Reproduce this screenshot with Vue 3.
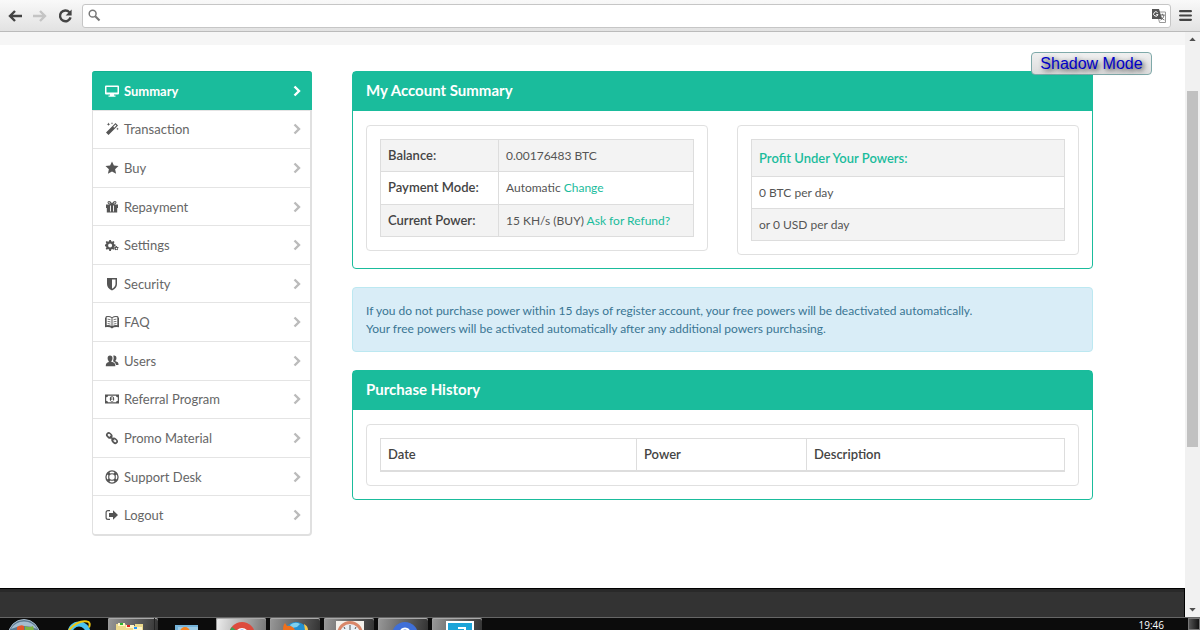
<template>
  <div class="screen">
    <header class="toolbar">
      <button class="tool" aria-label="Back">
        <svg viewBox="0 0 16 16"><path class="stroke dark" d="M15 8H3M8 3L3 8l5 5" /></svg>
      </button>
      <button class="tool" aria-label="Forward" disabled>
        <svg viewBox="0 0 16 16"><path class="stroke pale" d="M1 8h12M8 3l5 5-5 5" /></svg>
      </button>
      <button class="tool" aria-label="Reload">
        <svg viewBox="0 0 16 16">
          <path class="stroke dark" d="M12.4 4.2A5.4 5.4 0 1 0 13.6 9.4" />
          <path class="dark-fill" d="M14.6 1.4v6.2H8.6z" />
        </svg>
      </button>
      <form class="omnibox" @submit.prevent>
        <svg class="search" viewBox="0 0 14 14">
          <circle cx="5" cy="5" r="3.7" fill="none" stroke="#777" stroke-width="1.6" />
          <path d="M7.8 7.8l4.6 4.6" stroke="#777" stroke-width="2.2" />
        </svg>
        <input v-model="address" type="text" aria-label="Address" />
        <svg class="translate" viewBox="0 0 14 14">
          <path d="M5 3h8.5v10.5H7.5z" fill="#fff" stroke="#999" />
          <path d="M0 0h7l3 10H0z" fill="#555" />
          <path d="M5.6 3.6A2.2 2.2 0 1 0 6 5.6H4.2" fill="none" stroke="#fff" />
          <path d="M8 6h4.6M10.4 4.8V6M12 6c-.4 2.4-1.6 4-3.4 5M8.8 7.4c.6 1.6 1.8 2.8 3.6 3.6" fill="none" stroke="#666" />
        </svg>
      </form>
      <button class="tool menu" aria-label="Menu">
        <svg viewBox="0 0 12 12"><path d="M1 2h10M1 6h10M1 10h10" stroke="#444" stroke-width="2" stroke-linecap="round" /></svg>
      </button>
    </header>

    <div class="viewport">
      <div class="page">
        <div class="strip"></div>
        <button class="shadow-mode">Shadow Mode</button>

        <div class="container">
          <nav class="sidebar">
            <a
              v-for="item in menu"
              :key="item.name"
              href="#"
              :class="{ active: item.name === current }"
              @click.prevent="current = item.name"
            >
              <svg class="icon" viewBox="0 0 14 14"><path :d="item.icon" fill-rule="evenodd" /></svg>
              <span>{{ item.name }}</span>
              <svg class="chevron" viewBox="0 0 8 12"><path d="M1.5 1.5L6 6l-4.5 4.5" /></svg>
            </a>
          </nav>

          <main class="main">
            <section class="panel">
              <h2>My Account Summary</h2>
              <div class="panel-body columns">
                <div class="well">
                  <table class="striped account">
                    <tbody>
                      <tr v-for="row in account" :key="row.label">
                        <th scope="row">{{ row.label }}</th>
                        <td>{{ row.value }} <a v-if="row.link" href="#">{{ row.link }}</a></td>
                      </tr>
                    </tbody>
                  </table>
                </div>
                <div class="well">
                  <table class="striped profit">
                    <thead>
                      <tr><th scope="col">Profit Under Your Powers:</th></tr>
                    </thead>
                    <tbody>
                      <tr><td>0 BTC per day</td></tr>
                      <tr><td>or 0 USD per day</td></tr>
                    </tbody>
                  </table>
                </div>
              </div>
            </section>

            <div class="alert">
              If you do not purchase power within 15 days of register account, your free powers will be deactivated automatically.<br />
              Your free powers will be activated automatically after any additional powers purchasing.
            </div>

            <section class="panel">
              <h2>Purchase History</h2>
              <div class="panel-body">
                <div class="well">
                  <table class="history">
                    <thead>
                      <tr>
                        <th scope="col" class="date">Date</th>
                        <th scope="col" class="power">Power</th>
                        <th scope="col">Description</th>
                      </tr>
                    </thead>
                  </table>
                </div>
              </div>
            </section>
          </main>
        </div>

        <footer class="footer"></footer>
      </div>

      <div class="scrollbar">
        <svg viewBox="0 0 15 15"><path d="M7.5 5.5l3.2 3.5H4.3z" /></svg>
        <div class="before"></div>
        <div class="thumb"></div>
        <div class="after"></div>
        <svg viewBox="0 0 15 15"><path d="M7.5 9.5L4.3 6h6.4z" /></svg>
      </div>
    </div>

    <div class="taskbar">
      <button class="task" aria-label="Start">
        <svg viewBox="0 0 50 12">
          <circle cx="24" cy="17" r="15.5" fill="#5b7890" stroke="#a9bccb" />
          <path d="M11 11a15 15 0 0 1 26 0q-13-6-26 0z" fill="#a5bdd0" />
          <path d="M17 12V9q4-3 7-1v4z" fill="#e4572b" />
          <path d="M25 12V8q4 2 8 0l1 4z" fill="#7db342" />
        </svg>
      </button>
      <button class="task" aria-label="Internet Explorer">
        <svg viewBox="0 0 50 12">
          <circle cx="25" cy="15" r="9" fill="none" stroke="#4cc3f0" stroke-width="5" />
          <path d="M15 12Q24 2 33 3.5q4 .5 2 6" fill="none" stroke="#f2c811" stroke-width="2" />
        </svg>
      </button>
      <button class="task open" aria-label="Explorer">
        <svg viewBox="0 0 50 12">
          <path d="M46.5 0v12" stroke="#222" />
          <path d="M8 12V6h9l2 2h8V6h8v6z" fill="#ecd98c" />
          <path d="M10 5h7v3h-7zM18 7h8v3h-8zM25 9h9v3h-9z" fill="#fff6c8" />
          <path d="M12 5h3v2h-3z" fill="#2db52d" />
          <path d="M19 7h3v2h-3z" fill="#d22" />
          <path d="M26 9h3v2h-3z" fill="#29f" />
        </svg>
      </button>
      <button class="task" aria-label="Media Player">
        <svg viewBox="0 0 50 12">
          <path d="M13 7h23v5H13z" fill="#74b2d8" />
          <path d="M16 9h20v3H16z" fill="#9ccbe6" />
          <circle cx="23" cy="14" r="5" fill="#f58220" />
        </svg>
      </button>
      <button class="task open focus" aria-label="Chrome">
        <svg viewBox="0 0 50 12">
          <circle cx="26" cy="17" r="13" fill="#dd4b3e" />
          <path d="M13 17q0-5 3-8l5 4z" fill="#3ba556" />
          <circle cx="26" cy="17" r="7" fill="#fff" />
          <circle cx="26" cy="17" r="5.5" fill="#4285f4" />
        </svg>
      </button>
      <button class="task open" aria-label="Firefox">
        <svg viewBox="0 0 50 12">
          <circle cx="26" cy="16" r="12" fill="#2490d0" />
          <path d="M20 7q5-4 10-1l-3 3-5 1z" fill="#7fd0ee" />
          <path d="M13 12q0-5 2-7l2 3q5-1 8 4z" fill="#f0701c" />
          <path d="M34 6q4 2 4 6h-3z" fill="#f8c84a" />
        </svg>
      </button>
      <button class="task open" aria-label="Clock">
        <svg viewBox="0 0 50 12">
          <path d="M12 3h28v9H12z" fill="#f4f1ec" />
          <circle cx="26" cy="16" r="11.5" fill="#e9eff5" stroke="#d9876a" stroke-width="3" />
          <path d="M26 7v5M20 9l1 2M32 9l-1 2" stroke="#555" />
        </svg>
      </button>
      <button class="task open" aria-label="Browser">
        <svg viewBox="0 0 50 12">
          <circle cx="27" cy="17" r="13" fill="#3f6fd8" />
          <path d="M23 12q4-3 8 0" fill="none" stroke="#fff" stroke-width="2" />
        </svg>
      </button>
      <button class="task open" aria-label="Remote Desktop">
        <svg viewBox="0 0 50 12">
          <path d="M14 3h28v9H14z" fill="#fff" />
          <path d="M16 5h24v7H16z" fill="#1ca4d8" />
          <path d="M26 9h8v3h-2v-1h-6z" fill="#fff" />
        </svg>
      </button>
      <time class="clock">19:46</time>
      <button class="show-desktop" aria-label="Show desktop"></button>
    </div>
  </div>
</template>

<script setup>
import { ref } from 'vue';

const address = ref('');
const current = ref('Summary');

const menu = [
  { name: 'Summary', icon: 'M1 1.5h12q1 0 1 1v7q0 1-1 1H9v1h1.500v1.200h-7v-1.200H5v-1H1q-1 0-1-1v-7q0-1 1-1zM1.500 3v5.500h11V3z' },
  { name: 'Transaction', icon: 'M10.500 1l2.500 2.500-9.500 9.500-2.500-2.500zM10.500 2.600L8.300 4.800l.9.900 2.200-2.200zM3.500 .5l.5 1.300 1.300.5-1.300.5-.5 1.300-.5-1.300-1.300-.5L3 1.800zM7 0l.3.900.9.300-.9.300L7 2.400l-.3-.9-.9-.3.900-.3zM12.500 5.500l.4 1 1 .4-1 .4-.4 1-.4-1-1-.4 1-.4z' },
  { name: 'Buy', icon: 'M7 .5l1.900 4.100 4.600.5-3.400 3.100 1 4.600L7 10.500l-4.100 2.300 1-4.600L.5 5.100l4.600-.5z' },
  { name: 'Repayment', icon: 'M1 4.500h4.200Q2.500 4.500 2.500 2.600 2.500 1 4 1q1.500 0 3 2.200Q8.500 1 10 1q1.500 0 1.500 1.600 0 1.900-2.700 1.900H13V8h-.8v4.500H1.800V8H1zM4 2.200q-.7 0-.6.600 0 .8 2.200.7Q4.700 2.200 4 2.200zM10 2.200q-.7 0-1.600 1.300 2.200.1 2.200-.7 0-.6-.6-.6zM5 5.500v6h.9v-6zM8.100 5.500v6H9v-6z' },
  { name: 'Settings', icon: 'M4.300 2h1.600l.3 1.300 1 .4 1.200-.7 1.100 1.100-.7 1.200.4 1 1.300.3v1.600l-1.300.3-.4 1 .7 1.200-1.100 1.100-1.200-.7-1 .4L5.900 13H4.300L4 11.500l-1-.4-1.200.7-1.100-1.100.7-1.200-.4-1L0 8.200V6.600l1-.3.4-1-.7-1.200L1.800 3l1.200.7 1-.4zM5.100 5.400a2 2 0 1 0 0 4 2 2 0 0 0 0-4zM11.800 8l.5.900 1 .1.300.8-.7.700.1 1.100-.8.600-.9-.4-1 .4-.7-.6.200-1-.7-.8.400-.9 1-.1.500-.8zM11.500 9.700a.8.8 0 1 0 0 1.600.8.800 0 0 0 0-1.600z' },
  { name: 'Security', icon: 'M2 1h10v6q0 4-5 6.500Q2 11 2 7zM7 2.500v9.200q3.500-2 3.500-4.700V2.500z' },
  { name: 'FAQ', icon: 'M0 2.500h.8V1.300Q4.800.5 7 2.300 9.200.5 13.200 1.300v1.200h.8v9.700q-5-.6-7 1.300-2-1.900-7-1.300zM1.700 2.200v8q3-.4 4.800.9v-8Q4.500 1.700 1.700 2.200zM12.300 2.200q-2.800-.5-4.800.9v8q1.800-1.300 4.800-.9zM2.600 3.800q1.600-.1 2.900.6v.8q-1.300-.7-2.900-.6zM2.600 6q1.600-.1 2.900.6v.8q-1.300-.7-2.900-.6zM2.600 8.200q1.600-.1 2.900.6v.8q-1.300-.7-2.900-.6zM11.400 3.800v.8q-1.600-.1-2.900.6v-.8q1.300-.7 2.900-.6zM11.400 6v.8q-1.600-.1-2.900.6v-.8q1.300-.7 2.900-.6zM11.400 8.200v.8q-1.600-.1-2.900.6v-.8q1.300-.7 2.900-.6z' },
  { name: 'Users', icon: 'M5 1.500q2.500 0 2.500 2.700 0 1.900-1.200 3v.6q4 .7 4 3.700v.8H.8v-.8q0-2.600 3-3.500v-.8Q2.600 6.100 2.600 4.200 2.600 1.500 5 1.500zM8.300 1.500h1.200q2 0 2 2.500 0 1.700-1 2.600v.6q3 .6 3 3.200v.6h-2.400q-.5-2.700-3-3.800 1.200-3 .2-5.700z' },
  { name: 'Referral Program', icon: 'M0 2.500h14v9H0zM3 3.700q0 1.600-1.800 1.600v3.400q1.800 0 1.800 1.600h8q0-1.600 1.800-1.600V5.300Q11 5.300 11 3.700zM7 4.300q2.200 0 2.200 2.700T7 9.700 4.800 7 7 4.300zM6.200 5.800l1-.7h.5v3h.7v.8H5.900v-.8h.7V6l-.4.200z' },
  { name: 'Promo Material', icon: 'M1.800 2q1.900-1.900 3.800 0l1.100 1.100q1.500 1.500.6 3.200l.4.400q1.800-.8 3.300.7l1.100 1.100q1.900 1.900 0 3.800t-3.800 0L7.200 11.200q-1.500-1.500-.7-3.300l-.4-.4q-1.700.9-3.200-.6L1.800 5.800Q-.1 3.900 1.800 2zM3 3.200q-.7.700 0 1.400l1.100 1.100q.4.400 1 .3L4.400 5.200l.9-.9.7.8q.2-.5-.3-1L4.500 3q-.8-.6-1.500.2zM8.300 8.700q-.2.700.2 1.200l1.100 1.100q.7.700 1.400 0t0-1.400L9.900 8.500q-.5-.5-1.100-.3l.8.800-.7.700z' },
  { name: 'Support Desk', icon: 'M7 .3a6.700 6.700 0 1 0 0 13.400A6.700 6.700 0 0 0 7 .3zM7 1.600q1.400 0 2.600.7l-1 1.200q-1.600-.6-3.200 0l-1-1.200Q5.600 1.600 7 1.600zM2.200 4.500l1.200 1q-.6 1.500 0 3l-1.200 1q-1.300-2.500 0-5zM11.800 4.500q1.300 2.500 0 5l-1.200-1q.6-1.500 0-3zM7 4.300a2.700 2.700 0 1 1 0 5.400 2.700 2.700 0 0 1 0-5.400zM4.400 11.700l1-1.200q1.600.6 3.200 0l1 1.200q-2.600 1.400-5.200 0z' },
  { name: 'Logout', icon: 'M5 2v1.200H3q-1.300 0-1.300 1.300v5q0 1.300 1.300 1.300h2V12H3Q.5 12 .5 9.500v-5Q.5 2 3 2zM8 2.200L13 7l-5 4.800V9H4V5h4z' },
];

const account = [
  { label: 'Balance:', value: '0.00176483 BTC' },
  { label: 'Payment Mode:', value: 'Automatic', link: 'Change' },
  { label: 'Current Power:', value: '15 KH/s (BUY)', link: 'Ask for Refund?' },
];
</script>

<style>
body {
  background: #fff;
}
</style>

<style scoped>
* {
  box-sizing: border-box;
}

.screen {
  display: flex;
  flex-direction: column;
  height: 100vh;
  overflow: hidden;
  font-family: Lato, "Open Sans", sans-serif;
  font-size: 13px;
  line-height: 18px;
  color: #555;
}

svg {
  display: block;
}

button {
  padding: 0;
  border: 0;
  background: none;
}

a {
  color: #1abc9c;
  text-decoration: none;
}

/* browser toolbar */
.toolbar {
  display: flex;
  flex: none;
  align-items: center;
  gap: 9px;
  height: 32px;
  padding: 0 8px 0 7px;
  border-bottom: 1px solid #bbb;
  background: linear-gradient(#f9f9f9, #e2e2e2);
}

.tool svg {
  width: 16px;
  height: 16px;
}

.tool.menu {
  margin-left: -1px;
}

.tool.menu svg {
  width: 13px;
  height: 13px;
}

.stroke {
  fill: none;
  stroke-width: 2.4;
}

.dark {
  stroke: #444;
}

.pale {
  stroke: #c4c4c4;
}

.dark-fill {
  fill: #444;
}

.omnibox {
  display: flex;
  flex: 1;
  align-items: center;
  height: 24px;
  padding: 0 4px 0 5px;
  border: 1px solid #c6c6c6;
  border-radius: 3px;
  background: #fff;
}

.omnibox input {
  flex: 1;
  min-width: 0;
  border: 0;
  outline: 0;
}

.search {
  width: 13px;
  height: 13px;
}

.translate {
  width: 14px;
  height: 14px;
}

/* page */
.viewport {
  display: flex;
  flex: 1;
  min-height: 0;
}

.page {
  position: relative;
  display: flex;
  flex: 1;
  flex-direction: column;
  overflow: hidden;
}

.strip {
  flex: none;
  height: 13px;
  background: #f6f6f6;
}

.shadow-mode {
  position: absolute;
  top: 20px;
  right: 33px;
  width: 121px;
  height: 23px;
  border: 1px solid #7fa9a9;
  border-radius: 4px;
  background: linear-gradient(#f0f0f0, #dcdcdc);
  font: 16px/20px "Liberation Sans", sans-serif;
  color: #0000c8;
  text-shadow: 2px 2px 5px #222;
}

.container {
  display: flex;
  align-items: flex-start;
  gap: 40px;
  width: 100%;
  max-width: 1001px;
  margin: 26px auto;
}

.sidebar {
  display: flex;
  flex: none;
  flex-direction: column;
  width: 220px;
  min-height: 465px;
  border: 1px solid #e0e0e0;
  border-right-width: 2px;
  border-bottom-width: 2px;
  border-radius: 4px;
}

.sidebar a {
  display: flex;
  flex: 1;
  align-items: center;
  gap: 5px;
  padding: 0 9px 0 12px;
  border-top: 1px solid #e4e4e4;
  color: #666;
}

.sidebar a span {
  flex: 1;
}

.sidebar a.active {
  margin: -1px -2px 0 -1px;
  padding: 0 11px 0 13px;
  border-color: #12b090;
  border-radius: 3px 3px 0 0;
  background: #1abc9c;
  font-weight: bold;
  color: #fff;
}

.icon {
  width: 14px;
  height: 14px;
  fill: #555;
}

.active .icon {
  fill: #fff;
}

.chevron {
  width: 8px;
  height: 12px;
  fill: none;
  stroke: #bbb;
  stroke-width: 2.4;
}

.active .chevron {
  stroke: #fff;
}

.main {
  display: flex;
  flex: 1;
  flex-direction: column;
  gap: 18px;
  min-width: 0;
}

.panel {
  border: 1px solid #1abc9c;
  border-radius: 4px;
}

.panel h2 {
  margin: 0;
  padding: 9px 13px 11px;
  background: #1abc9c;
  font-size: 15px;
  line-height: 19px;
  font-weight: bold;
  color: #fff;
}

.panel-body {
  padding: 14px 13px 13px;
}

.columns {
  display: grid;
  grid-template-columns: 1fr 1fr;
  align-items: start;
  gap: 29px;
}

.well {
  padding: 13px;
  border: 1px solid #e0e0e0;
  border-radius: 4px;
}

table {
  width: 100%;
  border-collapse: collapse;
  table-layout: fixed;
}

th,
td {
  padding: 7px;
  border: 1px solid #ddd;
  line-height: 17px;
  text-align: left;
}

th {
  font-weight: 600;
  color: #444;
}

td {
  font-size: 12px;
}

.striped tr:nth-child(odd) {
  background: #f3f3f3;
}

.account {
  height: 98px;
}

.account th {
  width: 118px;
}

.profit {
  height: 102px;
}

.profit th {
  padding: 10px 7px 9px;
  color: #1abc9c;
}

.profit tbody tr:nth-child(odd) {
  background: #fff;
}

.profit tbody tr:nth-child(even) {
  background: #f3f3f3;
}

.history th {
  border-bottom-width: 2px;
}

.history .date {
  width: 256px;
}

.history .power {
  width: 170px;
}

.alert {
  padding: 14px 13px 13px;
  border: 1px solid #bce8f1;
  border-radius: 4px;
  background: #d9edf7;
  font-size: 12px;
  color: #3a7694;
}

.footer {
  flex: none;
  height: 29px;
  margin-top: auto;
  border: 1px solid #000;
  border-width: 1px 1px 0 0;
  background: linear-gradient(#292929 3px, #333 3px);
}

/* scrollbar */
.scrollbar {
  display: flex;
  flex: none;
  flex-direction: column;
  width: 15px;
  background: #f1f1f1;
}

.scrollbar svg {
  width: 15px;
  height: 15px;
  fill: #505050;
}

.before {
  flex: 44;
}

.thumb {
  flex: 356;
  margin: 0 2px;
  background: #c1c1c1;
}

.after {
  flex: 155;
}

/* taskbar */
.taskbar {
  display: flex;
  flex: none;
  gap: 4px;
  height: 13px;
  overflow: hidden;
  border-top: 1px solid #666;
  background: #0c0c0c;
}

.task {
  width: 50px;
  height: 12px;
}

.task svg {
  width: 50px;
  height: 12px;
}

.task.open {
  border-radius: 2px 2px 0 0;
  background: linear-gradient(100deg, #999, #333);
  box-shadow: inset 0 1px #aaa, inset 1px 0 #999;
}

.task.focus {
  background: linear-gradient(100deg, #eee, #777);
}

.clock {
  margin: 2px 20px 0 auto;
  font: 10px/10px "Open Sans", sans-serif;
  color: #fff;
}

.show-desktop {
  width: 12px;
  border: 1px solid #777;
  background: linear-gradient(90deg, #555, #111);
}
</style>
